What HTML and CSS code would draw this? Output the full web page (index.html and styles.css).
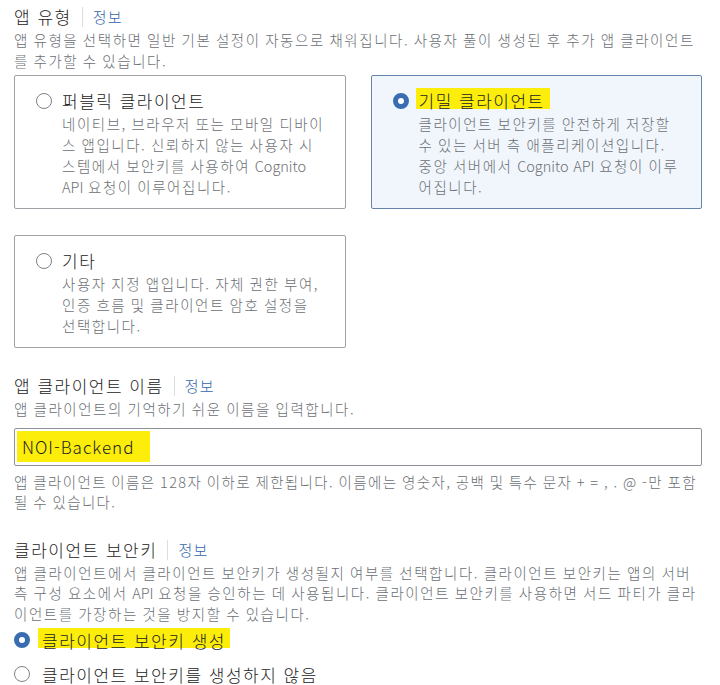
FILE: index.html
```html
<!DOCTYPE html>
<html lang="ko">
<head>
    <meta charset="UTF-8">
    <meta name="viewport" content="width=device-width, initial-scale=1.0">
    <title>앱 클라이언트</title>
    <link rel="stylesheet" href="styles.css">
</head>
<body>
    <div class="page">
        <div class="field">
            <div class="field-head">
                <span class="field-title">앱 유형</span>
                <a class="info" href="#">정보</a>
            </div>
            <div class="field-desc">앱 유형을 선택하면 일반 기본 설정이 자동으로 채워집니다. 사용자 풀이 생성된 후 추가 앱 클라이언트를 추가할 수 있습니다.</div>

            <div class="tiles">
                <div class="tile">
                    <span class="radio"></span>
                    <div class="tile-body">
                        <div class="tile-title">퍼블릭 클라이언트</div>
                        <div class="tile-desc">네이티브, 브라우저 또는 모바일 디바이스 앱입니다. 신뢰하지 않는 사용자 시스템에서 보안키를 사용하여 <span class="en">Cognito</span> <span class="en">API</span> 요청이 이루어집니다.</div>
                    </div>
                </div>
                <div class="tile selected">
                    <span class="radio checked"></span>
                    <div class="tile-body">
                        <div class="tile-title"><span class="mark mark-title">기밀 클라이언트</span></div>
                        <div class="tile-desc">클라이언트 보안키를 안전하게 저장할 수 있는 서버 측 애플리케이션입니다. 중앙 서버에서 <span class="en">Cognito</span> <span class="en">API</span> 요청이 이루어집니다.</div>
                    </div>
                </div>
                <div class="tile">
                    <span class="radio"></span>
                    <div class="tile-body">
                        <div class="tile-title">기타</div>
                        <div class="tile-desc">사용자 지정 앱입니다. 자체 권한 부여, 인증 흐름 및 클라이언트 암호 설정을 선택합니다.</div>
                    </div>
                </div>
            </div>
        </div>

        <div class="field field-name">
            <div class="field-head">
                <span class="field-title">앱 클라이언트 이름</span>
                <a class="info" href="#">정보</a>
            </div>
            <div class="field-desc">앱 클라이언트의 기억하기 쉬운 이름을 입력합니다.</div>
            <div class="input"><span class="mark mark-input">NOI-Backend</span></div>
            <div class="field-hint">앱 클라이언트 이름은 128자 이하로 제한됩니다. 이름에는 영숫자, 공백 및 특수 문자 + = , . @ -만 포함될 수 있습니다.</div>
        </div>

        <div class="field field-secret">
            <div class="field-head">
                <span class="field-title">클라이언트 보안키</span>
                <a class="info" href="#">정보</a>
            </div>
            <div class="field-desc">앱 클라이언트에서 클라이언트 보안키가 생성될지 여부를 선택합니다. 클라이언트 보안키는 앱의 서버 측 구성 요소에서 <span class="en">API</span> 요청을 승인하는 데 사용됩니다. 클라이언트 보안키를 사용하면 서드 파티가 클라이언트를 가장하는 것을 방지할 수 있습니다.</div>
            <div class="options">
                <div class="option">
                    <span class="radio checked"></span>
                    <span class="option-label"><span class="mark mark-option">클라이언트 보안키 생성</span></span>
                </div>
                <div class="option">
                    <span class="radio"></span>
                    <span class="option-label">클라이언트 보안키를 생성하지 않음</span>
                </div>
            </div>
        </div>
    </div>
</body>
</html>
```

FILE: styles.css
```css
body {
    margin: 0;
    background: #fff;
    font-family: "Noto Sans CJK KR", sans-serif;
    font-weight: 300;
    color: #16191f;
}
.page {
    padding: 0 18px 0 14px;
}

.field-head {
    display: flex;
    align-items: center;
    height: 26px;
    margin-top: 4px;
}
.field-title {
    font-size: 17px;
    letter-spacing: 1.5px;
    color: #222;
    padding-right: 10px;
    border-right: 1px solid #dcdfe2;
    line-height: 20px;
}
.info {
    font-size: 15px;
    letter-spacing: 1.3px;
    color: #3165a8;
    text-decoration: none;
    padding-left: 10px;
    line-height: 20px;
}
.field-desc,
.field-hint {
    font-size: 14.5px;
    letter-spacing: 1.56px;
    word-spacing: -1px;
    line-height: 20.5px;
    color: #6b6f74;
}
.en {
    letter-spacing: 0;
}

/* type tiles */
.tiles {
    display: grid;
    grid-template-columns: 1fr 1fr;
    column-gap: 25px;
    row-gap: 26px;
    margin-top: 4px;
}
.tile {
    display: flex;
    border: 1px solid #9ea1a5;
    border-radius: 2px;
    padding: 13px 18.5px 11px 21px;
}
.tile.selected {
    background: #f1f6fc;
    border-color: #6584ad;
}
.tile-body {
    margin-left: 10px;
}
.tile-title {
    font-size: 17px;
    letter-spacing: 1.5px;
    line-height: 24px;
    color: #222;
}
.tile-desc {
    font-size: 14.5px;
    letter-spacing: 1.56px;
    word-spacing: -1px;
    line-height: 21px;
    color: #6b6f74;
}

.radio {
    flex: none;
    box-sizing: border-box;
    width: 16px;
    height: 16px;
    margin-top: 4px;
    border: 1.5px solid #7f8287;
    border-radius: 50%;
    background: #fff;
}
.radio.checked {
    border: 5px solid #3a6cb2;
}

/* highlighter marks */
.mark {
    background: linear-gradient(to bottom, #fcee0a 0, #fcee0a 82%, transparent 82%);
}
.mark-title {
    padding: 0 5px 0 3px;
    margin-left: -3px;
}
.mark-input {
    background: #fcee0a;
    padding: 3px 16px 3px 5px;
    margin-left: -8px;
}
.mark-option {
    padding: 0 4px;
    margin-left: -4px;
}

/* name */
.field-name {
    margin-top: 25px;
}
.input {
    margin-top: 8px;
    height: 38px;
    box-sizing: border-box;
    border: 1px solid #8d9298;
    border-radius: 2px;
    padding: 0 10px;
    display: flex;
    align-items: center;
    font-size: 17px;
    letter-spacing: 1px;
    color: #222;
}
.field-hint {
    margin-top: 6px;
    letter-spacing: 1.4px;
}

/* secret */
.field-secret {
    margin-top: 24px;
}
.options {
    display: flex;
    flex-direction: column;
    gap: 2px;
}
.option {
    display: flex;
    align-items: center;
    height: 32px;
}
.option .radio {
    margin-top: 0;
}
.option-label {
    margin-left: 12px;
    font-size: 17px;
    letter-spacing: 1.5px;
    color: #222;
}
```
